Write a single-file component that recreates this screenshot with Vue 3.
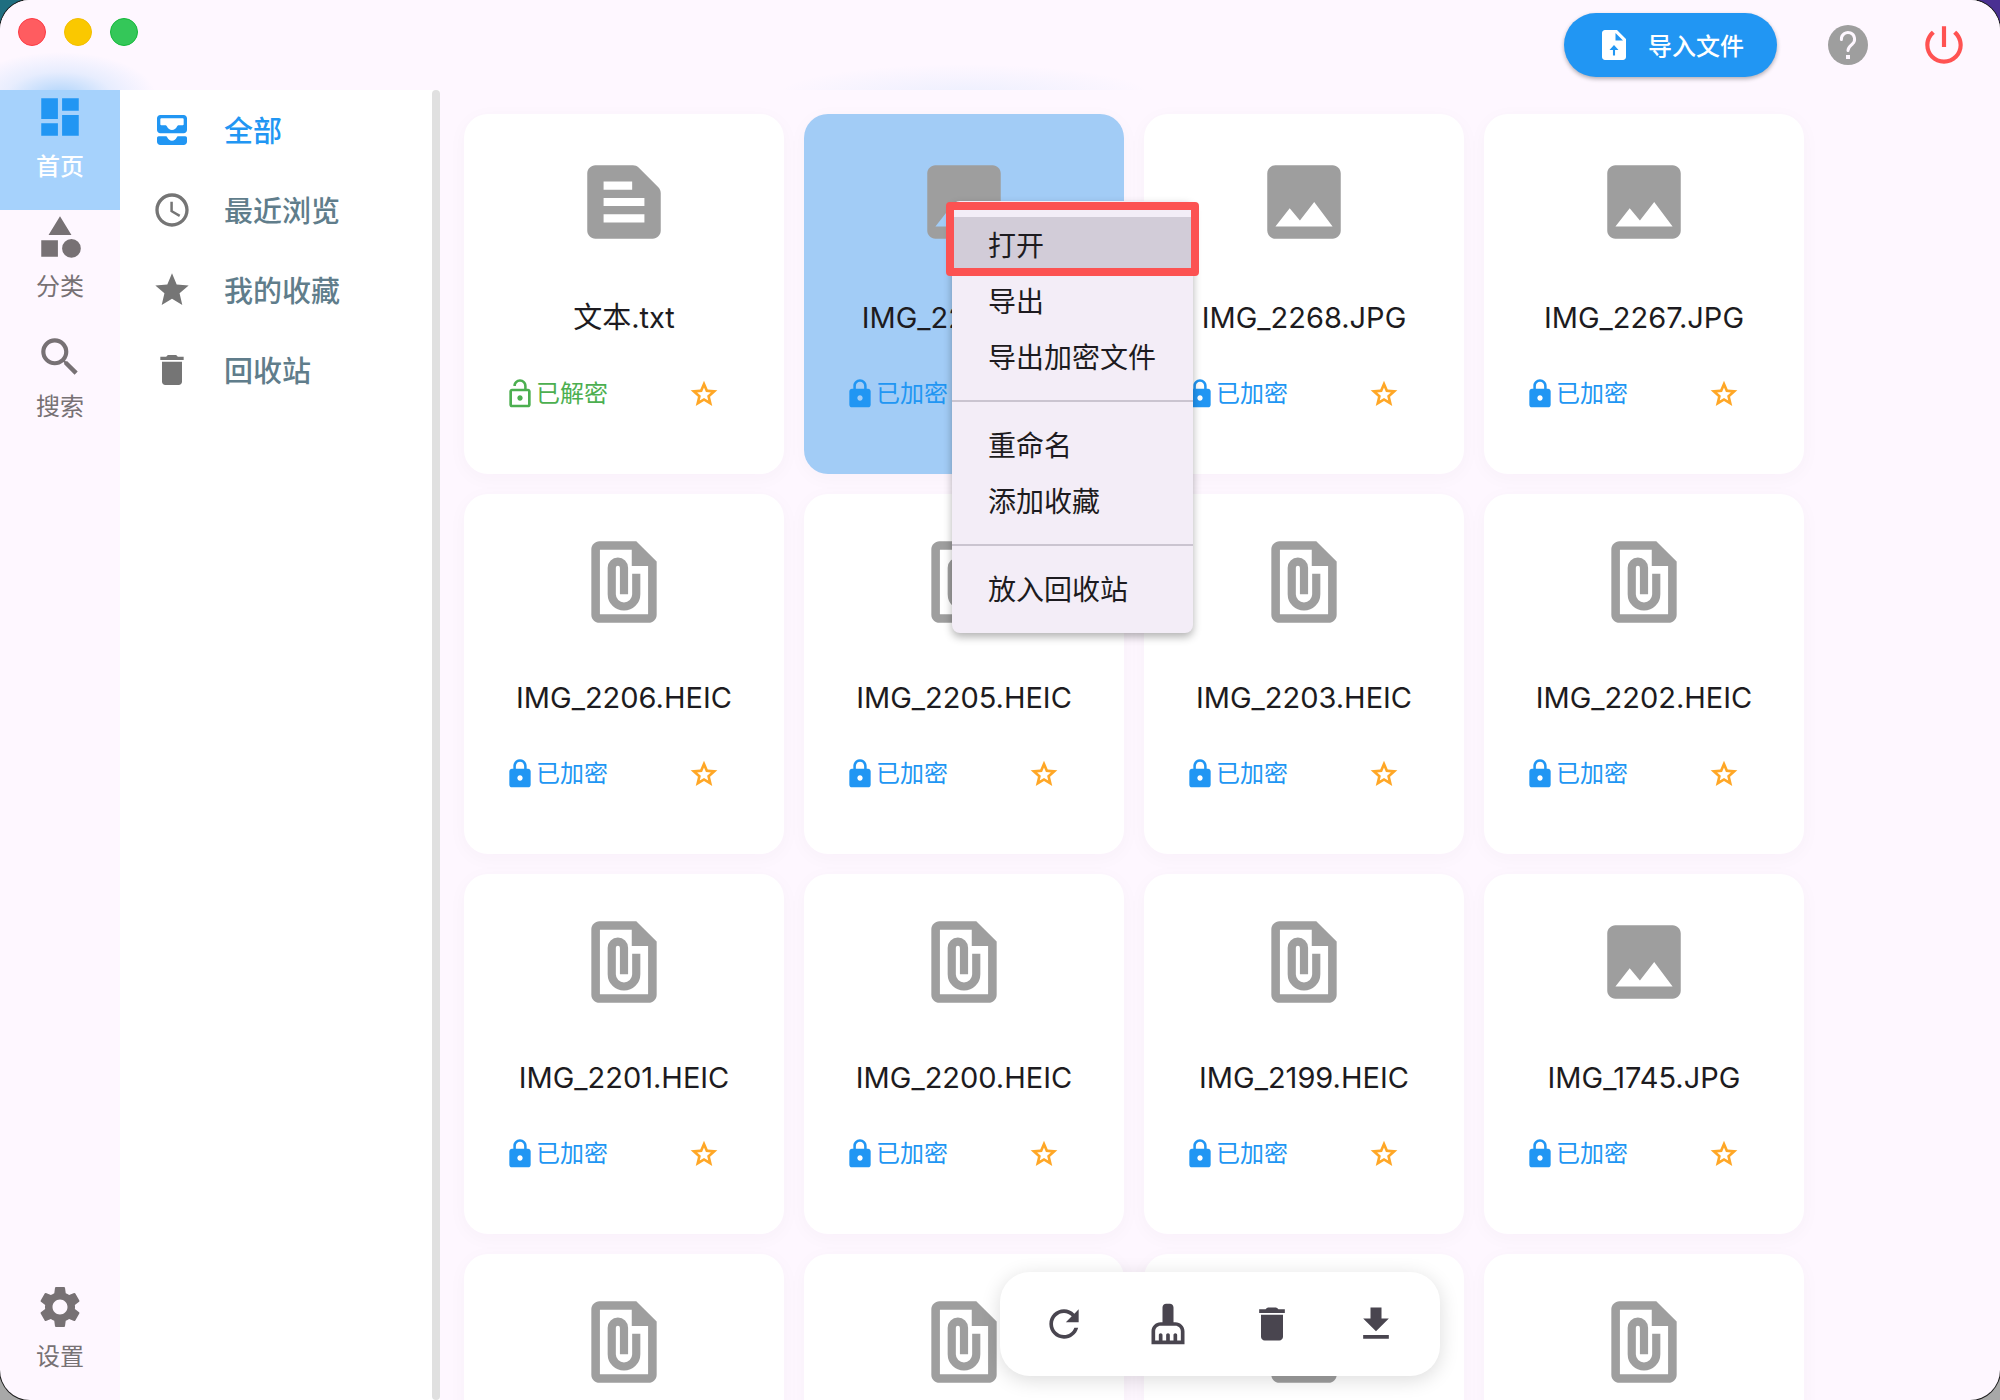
<script setup>
import { ref } from 'vue'

const icons = {
  dashboard: 'M3 13h8V3H3v10zm0 8h8v-6H3v6zm10 0h8V11h-8v10zm0-18v6h8V3h-8z',
  category: 'M12 2l-5.5 9h11L12 2zM17.5 13a4.5 4.5 0 1 0 0 9 4.5 4.5 0 0 0 0-9zM3 13.500h8v8H3z',
  search: 'M15.500 14h-.79l-.28-.27A6.471 6.471 0 0 0 16 9.500 6.500 6.500 0 1 0 9.500 16c1.610 0 3.090-.59 4.230-1.570l.27.28v.79l5 4.990L20.490 19l-4.990-5zm-6 0C7.010 14 5 11.990 5 9.500S7.010 5 9.500 5 14 7.010 14 9.500 11.990 14 9.500 14z',
  settings: 'M19.140 12.940c.04-.3.06-.61.06-.94 0-.32-.02-.64-.07-.94l2.030-1.580c.18-.14.23-.41.12-.61l-1.920-3.320c-.12-.22-.37-.29-.59-.22l-2.390.96c-.5-.38-1.030-.7-1.620-.94l-.36-2.540c-.04-.24-.24-.41-.48-.41h-3.840c-.24 0-.43.17-.47.41l-.36 2.540c-.59.24-1.130.57-1.620.94l-2.390-.96c-.22-.08-.47 0-.59.22L2.740 8.870c-.12.21-.08.47.12.61l2.030 1.580c-.05.3-.09.63-.09.94s.02.64.07.94l-2.030 1.580c-.18.14-.23.41-.12.61l1.920 3.320c.12.22.37.29.59.22l2.390-.96c.5.38 1.030.7 1.620.94l.36 2.540c.05.24.24.41.48.41h3.840c.24 0 .44-.17.47-.41l.36-2.540c.59-.24 1.130-.56 1.620-.94l2.390.96c.22.08.47 0 .59-.22l1.920-3.320c.12-.22.07-.47-.12-.61l-2.010-1.580zM12 15.600c-1.980 0-3.600-1.620-3.600-3.600s1.620-3.600 3.600-3.600 3.600 1.620 3.600 3.600-1.620 3.600-3.600 3.600z',
  inbox: 'M19 3H5c-1.100 0-2 .9-2 2v7c0 1.100.9 2 2 2h14c1.100 0 2-.9 2-2V5c0-1.100-.9-2-2-2zm0 5.500a.6.6 0 0 1-.6.6H16.200c-.6 0-.9.300-1.200.8C14.400 11.100 13.300 12 12 12s-2.400-.9-3-2.100c-.3-.5-.6-.8-1.200-.8H5.600a.6.6 0 0 1-.6-.6V5.600a.6.6 0 0 1 .6-.6h12.800a.6.6 0 0 1 .6.6zM15.900 15.700H20a1 1 0 0 1 1 1V19c0 1.100-.9 2-2 2H5c-1.100 0-2-.9-2-2v-2.300a1 1 0 0 1 1-1h4.100c.6 0 .9.300 1.100.800.5 1.100 1.500 2 2.800 2s2.300-.9 2.800-2c.2-.5.5-.8 1.100-.8z',
  clock: 'M11.990 2C6.470 2 2 6.480 2 12s4.470 10 9.990 10C17.520 22 22 17.520 22 12S17.520 2 11.990 2zM12 20c-4.420 0-8-3.580-8-8s3.580-8 8-8 8 3.580 8 8-3.580 8-8 8zm.5-13H11v6l5.250 3.150.75-1.230-4.500-2.670z',
  star: 'M12 17.270L18.180 21l-1.640-7.030L22 9.240l-7.190-.61L12 2 9.190 8.630 2 9.240l5.460 4.730L5.820 21z',
  starOutline: 'M22 9.240l-7.190-.62L12 2 9.190 8.630 2 9.240l5.460 4.730L5.820 21 12 17.270 18.180 21l-1.630-7.030L22 9.240zM12 15l-3.200 1.930.85-3.640-2.830-2.450 3.730-.32L12 7.080l1.450 3.440 3.730.32-2.830 2.450.85 3.640L12 15z',
  trash: 'M6 19c0 1.100.9 2 2 2h8c1.100 0 2-.9 2-2V7H6v12zM19 4h-3.500l-.7-.7c-.2-.2-.5-.3-.7-.3H9.900c-.2 0-.5.1-.7.3l-.7.7H5v2h14V4z',
  text: 'M20.410 8.410l-4.830-4.830c-.37-.37-.88-.58-1.410-.58H5c-1.100 0-2 .9-2 2v14c0 1.100.9 2 2 2h14c1.100 0 2-.9 2-2V9.830c0-.53-.21-1.040-.59-1.420zM7 7h7v2H7V7zm10 10H7v-2h10v2zm0-4H7v-2h10v2z',
  image: 'M21 19V5c0-1.100-.9-2-2-2H5c-1.100 0-2 .9-2 2v14c0 1.100.9 2 2 2h14c1.100 0 2-.9 2-2zM8.500 13.500l2.500 3.010L14.500 12l4.500 6H5l3.500-4.500z',
  attach: 'M15 2H6c-1.100 0-2 .9-2 2v16c0 1.100.9 2 2 2h12c1.100 0 2-.9 2-2V7l-5-5zM6.100 4.100h7.800v4h4V19.900H6.100zM8 8.500a2.500 2.500 0 0 1 5 0V15h-2V8.500a.5.5 0 0 0-1 0V15a2 2 0 0 0 4 0V10h2v5a4 4 0 0 1-8 0z',
  lock: 'M18 8h-1V6c0-2.760-2.240-5-5-5S7 3.240 7 6v2H6c-1.100 0-2 .9-2 2v10c0 1.100.9 2 2 2h12c1.100 0 2-.9 2-2V10c0-1.100-.9-2-2-2zm-6 9c-1.100 0-2-.9-2-2s.9-2 2-2 2 .9 2 2-.9 2-2 2zm3.100-9H8.900V6c0-1.710 1.390-3.100 3.100-3.100 1.710 0 3.100 1.390 3.100 3.100v2z',
  unlock: 'M12 17c1.100 0 2-.9 2-2s-.9-2-2-2-2 .9-2 2 .9 2 2 2zm6-9h-1V6c0-2.760-2.240-5-5-5S7 3.240 7 6h1.900c0-1.710 1.390-3.100 3.100-3.100s3.100 1.390 3.100 3.100v2H6c-1.100 0-2 .9-2 2v10c0 1.100.9 2 2 2h12c1.100 0 2-.9 2-2V10c0-1.100-.9-2-2-2zm0 12H6V10h12v10z',
  upload: 'M14 2H6c-1.100 0-2 .9-2 2v16c0 1.100.9 2 2 2h12c1.100 0 2-.9 2-2V8l-6-6zM13 9V4l5 5h-5zM11.300 19v-3.600H9L12 12l3 3.400h-2.300V19z',
  power: 'M13 3h-2v10h2V3zm4.830 2.170l-1.420 1.420C17.990 7.860 19 9.810 19 12c0 3.870-3.130 7-7 7s-7-3.130-7-7c0-2.190 1.010-4.140 2.580-5.420L6.170 5.170C4.230 6.820 3 9.260 3 12c0 4.970 4.030 9 9 9s9-4.030 9-9c0-2.740-1.230-5.180-3.170-6.830z',
  refresh: 'M17.650 6.350C16.200 4.900 14.210 4 12 4c-4.420 0-7.990 3.580-7.990 8s3.570 8 7.990 8c3.730 0 6.840-2.550 7.730-6h-2.080c-.82 2.330-3.040 4-5.650 4-3.310 0-6-2.690-6-6s2.690-6 6-6c1.660 0 3.140.69 4.220 1.780L13 11h7V4l-2.350 2.350z',
  clean: 'M16 11h-1V3c0-1.100-.9-2-2-2h-2c-1.100 0-2 .9-2 2v8H8c-2.760 0-5 2.240-5 5v7h18v-7c0-2.760-2.240-5-5-5zm3 10h-2v-3c0-.55-.45-1-1-1s-1 .45-1 1v3h-2v-3c0-.55-.45-1-1-1s-1 .45-1 1v3H9v-3c0-.55-.45-1-1-1s-1 .45-1 1v3H5v-5c0-1.650 1.350-3 3-3h8c1.650 0 3 1.350 3 3v5z',
  download: 'M19 9h-4V3H9v6H5l7 7 7-7zM5 18v2h14v-2H5z',
}

const rail = [
  { label: '首页', icon: 'dashboard' },
  { label: '分类', icon: 'category' },
  { label: '搜索', icon: 'search' },
]
const activeRail = ref('首页')

const folders = [
  { label: '全部', icon: 'inbox' },
  { label: '最近浏览', icon: 'clock' },
  { label: '我的收藏', icon: 'star' },
  { label: '回收站', icon: 'trash' },
]
const activeFolder = ref('全部')

const files = [
  { name: '文本.txt', icon: 'text', open: true },
  { name: 'IMG_2269.JPG', icon: 'image', selected: true },
  { name: 'IMG_2268.JPG', icon: 'image' },
  { name: 'IMG_2267.JPG', icon: 'image' },
  { name: 'IMG_2206.HEIC', icon: 'attach' },
  { name: 'IMG_2205.HEIC', icon: 'attach' },
  { name: 'IMG_2203.HEIC', icon: 'attach' },
  { name: 'IMG_2202.HEIC', icon: 'attach' },
  { name: 'IMG_2201.HEIC', icon: 'attach' },
  { name: 'IMG_2200.HEIC', icon: 'attach' },
  { name: 'IMG_2199.HEIC', icon: 'attach' },
  { name: 'IMG_1745.JPG', icon: 'image' },
  { icon: 'attach' },
  { icon: 'attach' },
  { icon: 'attach' },
  { icon: 'attach' },
]

const menuGroups = [
  ['打开', '导出', '导出加密文件'],
  ['重命名', '添加收藏'],
  ['放入回收站'],
]

const tools = ['refresh', 'clean', 'trash', 'download']
</script>

<template>
  <div class="window">
    <header class="titlebar">
      <div class="lights">
        <button class="light red" type="button"></button>
        <button class="light yellow" type="button"></button>
        <button class="light green" type="button"></button>
      </div>
      <div class="actions">
        <button class="import" type="button">
          <svg class="i36" viewBox="0 0 24 24"><path fill-rule="evenodd" :d="icons.upload" /></svg>
          <span>导入文件</span>
        </button>
        <button class="help" type="button">
          <svg class="i48" viewBox="0 0 24 24">
            <circle cx="12" cy="12" r="10" />
            <path class="mark" d="M8.700 9.300a3.300 3.300 0 1 1 5.500 2.200C12.900 12.600 12 13.200 12 14.700" />
            <rect class="dot" x="11" y="17" width="2" height="2" />
          </svg>
        </button>
        <button class="power" type="button">
          <svg class="i50" viewBox="0 0 24 24"><path :d="icons.power" /></svg>
        </button>
      </div>
    </header>

    <div class="body">
      <nav class="rail">
        <button
          v-for="item in rail"
          :key="item.label"
          type="button"
          class="rail-item"
          :class="{ active: item.label === activeRail }"
          @click="activeRail = item.label"
        >
          <svg class="i50" viewBox="0 0 24 24"><path fill-rule="evenodd" :d="icons[item.icon]" /></svg>
          <span>{{ item.label }}</span>
        </button>
        <button type="button" class="rail-item last">
          <svg class="i50" viewBox="0 0 24 24"><path fill-rule="evenodd" :d="icons.settings" /></svg>
          <span>设置</span>
        </button>
      </nav>

      <aside class="folders">
        <div class="folder-list">
          <button
            v-for="item in folders"
            :key="item.label"
            type="button"
            class="folder"
            :class="{ active: item.label === activeFolder }"
            @click="activeFolder = item.label"
          >
            <svg class="i40" viewBox="0 0 24 24"><path fill-rule="evenodd" :d="icons[item.icon]" /></svg>
            <span class="caption">{{ item.label }}</span>
          </button>
        </div>
        <div class="divider-bar"></div>
      </aside>

      <main class="content">
        <div class="grid">
          <article v-for="(file, index) in files" :key="index" class="card" :class="{ selected: file.selected }">
            <svg class="thumb" viewBox="0 0 24 24"><path fill-rule="evenodd" :d="icons[file.icon]" /></svg>
            <template v-if="file.name">
              <h3 class="name">{{ file.name }}</h3>
              <div class="meta">
                <span class="status" :class="{ open: file.open }">
                  <svg class="i32" viewBox="0 0 24 24">
                    <path fill-rule="evenodd" :d="file.open ? icons.unlock : icons.lock" />
                  </svg>
                  {{ file.open ? '已解密' : '已加密' }}
                </span>
                <button class="fav" type="button">
                  <svg class="i32" viewBox="0 0 24 24"><path fill-rule="evenodd" :d="icons.starOutline" /></svg>
                </button>
              </div>
            </template>

            <div v-if="file.selected" class="menu">
              <div v-for="(group, g) in menuGroups" :key="g" class="menu-group">
                <button
                  v-for="label in group"
                  :key="label"
                  type="button"
                  class="menu-item"
                  :class="{ hover: label === '打开' }"
                >
                  {{ label }}
                </button>
              </div>
            </div>
          </article>
        </div>

        <div class="toolbar">
          <button v-for="tool in tools" :key="tool" class="tool" type="button">
            <svg class="i44" viewBox="0 0 24 24"><path fill-rule="evenodd" :d="icons[tool]" /></svg>
          </button>
        </div>
      </main>
    </div>
  </div>
</template>

<style>
body {
  background:
    linear-gradient(#1f6e80, #1f6e80) top left / 50% 50% no-repeat,
    linear-gradient(#4a3092, #4a3092) top right / 50% 50% no-repeat,
    #a8a8a8;
}
</style>

<style scoped>
.window {
  display: flex;
  flex-direction: column;
  height: 100vh;
  overflow: hidden;
  border-radius: 30px;
  background: #fef7ff;
  box-shadow: 0 0 0 1px #1c1c1c;
  color: #1d1b20;
  font-family: Inter, "Noto Sans CJK SC", sans-serif;
}

button {
  display: flex;
  align-items: center;
  margin: 0;
  padding: 0;
  border: 0;
  background: none;
  color: inherit;
  font: inherit;
  cursor: pointer;
}

svg {
  display: block;
  flex: none;
  fill: currentColor;
}

.i32 { width: 32px; height: 32px; }
.i36 { width: 36px; height: 36px; }
.i40 { width: 40px; height: 40px; }
.i44 { width: 44px; height: 44px; }
.i48 { width: 48px; height: 48px; }
.i50 { width: 50px; height: 50px; }

.titlebar {
  display: flex;
  flex: none;
  justify-content: space-between;
  height: 90px;
  background:
    radial-gradient(ellipse 96px 44px at 60px 96px, rgba(33, 150, 243, 0.36), rgba(33, 150, 243, 0.1) 55%, transparent) no-repeat,
    radial-gradient(ellipse 190px 32px at 964px 96px, rgba(33, 150, 243, 0.08), transparent) no-repeat,
    #fef7ff;
}

.lights {
  display: flex;
  gap: 18px;
  padding: 18px;
}

.light {
  width: 28px;
  height: 28px;
  border-radius: 50%;
}

.red { background: #ff5c60; border: 1px solid #fc3a44; }
.yellow { background: #fac800; border: 1px solid #f2bd00; }
.green { background: #34c759; border: 1px solid #14b83a; }

.actions {
  display: flex;
  align-items: center;
  gap: 47px;
  padding-right: 31px;
}

.import {
  gap: 16px;
  height: 64px;
  padding: 0 33px 0 32px;
  border-radius: 32px;
  background: #2196f3;
  box-shadow: 0 2px 4px rgba(0, 0, 0, 0.3);
  color: #fff;
  font-size: 24px;
  font-weight: 500;
}

.import span,
.caption {
  padding-bottom: 2px;
}

.help { color: #9e9e9e; }
.mark { fill: none; stroke: #fef7ff; stroke-width: 1.5; stroke-linecap: round; }
.dot { fill: #fef7ff; }
.power { color: #ff5252; }

.body {
  display: flex;
  flex: 1;
  min-height: 0;
}

.rail {
  display: flex;
  flex: none;
  flex-direction: column;
  width: 120px;
  color: #777174;
}

.rail-item {
  flex-direction: column;
  gap: 7px;
  height: 120px;
  padding-top: 2px;
  font-size: 24px;
  line-height: 36px;
}

.rail-item.active {
  background: #a6d2fc;
  color: #2196f3;
  font-weight: 500;
}

.rail-item.active span { color: #fff; }
.rail-item.last { margin-top: auto; }

.folders {
  display: flex;
  flex: none;
  width: 320px;
  background: #fff;
}

.folder-list { flex: 1; }

.divider-bar {
  width: 8px;
  border-radius: 4px;
  background: #e0e0e0;
}

.folder {
  gap: 32px;
  width: 100%;
  height: 80px;
  padding-left: 32px;
  color: #607d8b;
  font-size: 29px;
  font-weight: 500;
}

.folder svg { color: #757575; }
.folder.active,
.folder.active svg { color: #2196f3; }

.content {
  position: relative;
  flex: 1;
  min-width: 0;
  overflow: hidden;
}

.grid {
  display: grid;
  grid-template-columns: repeat(auto-fill, 320px);
  gap: 20px;
  padding: 24px;
}

.card {
  position: relative;
  display: flex;
  flex-direction: column;
  align-items: center;
  height: 360px;
  box-sizing: border-box;
  padding-top: 39px;
  border-radius: 24px;
  background: #fff;
  box-shadow: 0 4px 20px rgba(60, 0, 60, 0.03);
}

.card.selected {
  z-index: 1;
  background: #a2ccf6;
}

.thumb {
  width: 98px;
  height: 98px;
  color: #9e9e9e;
}

.name {
  margin: 47px 0 0;
  font-size: 29px;
  font-weight: 400;
  line-height: 40px;
}

.meta {
  display: flex;
  align-items: center;
  justify-content: space-between;
  align-self: stretch;
  margin-top: 38px;
  padding: 0 64px 0 40px;
}

.status {
  display: flex;
  align-items: center;
  color: #2196f3;
  font-size: 24px;
  line-height: 36px;
}

.status.open { color: #4caf50; }
.fav { color: #ffa726; }

.menu {
  position: absolute;
  top: 87px;
  left: 148px;
  padding: 16px 0;
  border-radius: 8px;
  background: #f3edf7;
  box-shadow: 0 4px 8px rgba(0, 0, 0, 0.3);
}

.menu-group + .menu-group {
  margin-top: 15px;
  padding-top: 15px;
  border-top: 2px solid #cac4d0;
}

.menu-item {
  width: 100%;
  height: 56px;
  padding: 0 37px 2px 36px;
  font-size: 28px;
  white-space: nowrap;
}

.menu-item.hover {
  position: relative;
  background: #d2ccd8;
}

.menu-item.hover::after {
  content: "";
  position: absolute;
  inset: -15px -6px -3px;
  border: 8px solid #fc5252;
  border-radius: 4px;
}

.toolbar {
  position: absolute;
  bottom: 24px;
  left: 50%;
  z-index: 2;
  display: flex;
  gap: 60px;
  padding: 30px 42px;
  transform: translateX(-50%);
  border-radius: 30px;
  background: #fff;
  box-shadow: 0 4px 20px rgba(0, 0, 0, 0.14);
  color: #49454f;
}
</style>
